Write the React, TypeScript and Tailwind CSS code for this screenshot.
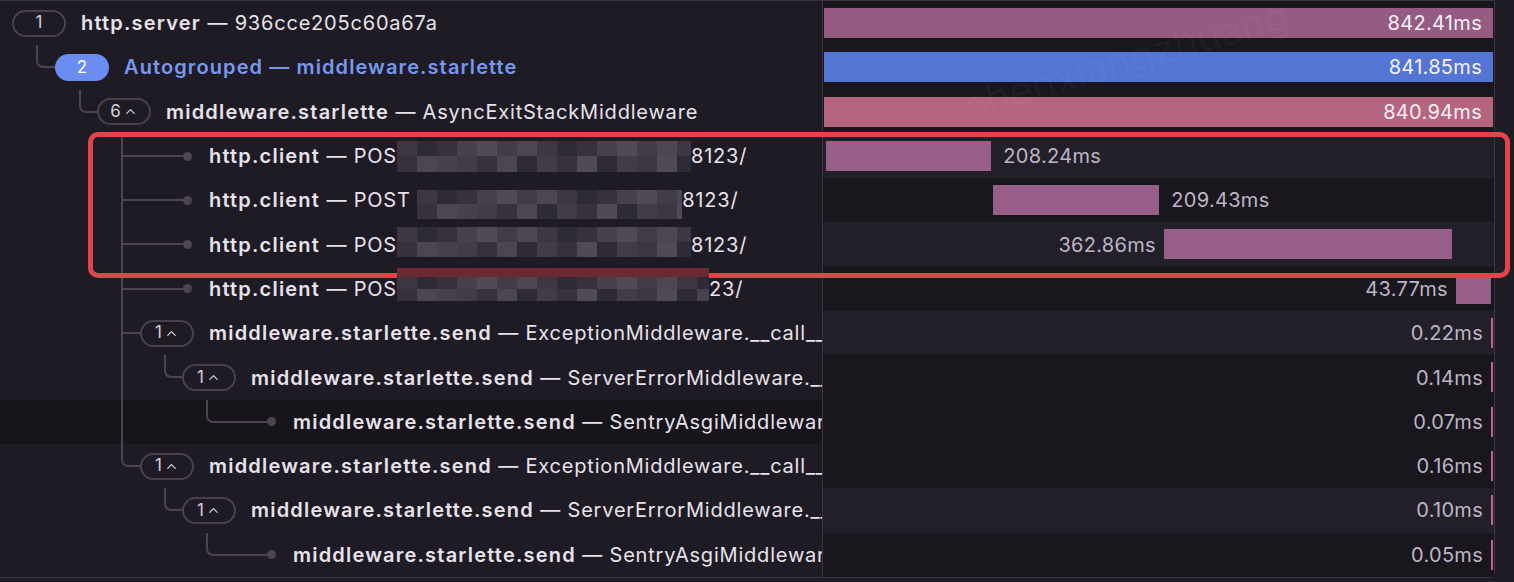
import { ChevronUp } from "lucide-react";

type Row = {
  depth: number;
  kind: "pill" | "leaf";
  count?: string;
  chevron?: boolean;
  blue?: boolean;
  name: string;
  desc?: string;
  redact?: "a" | "b" | "c" | "d";
  lines: string[];
  elbow?: string;
  rowBg?: string;
  barBg: string;
  start: number;
  dur: number;
  shown?: number;
  label: "inside" | "right" | "left";
  barColor: string;
};

const TOTAL = 842.41;

const padByDepth = [
  "pl-[12px]",
  "pl-[55px]",
  "pl-[97px]",
  "pl-[140px]",
  "pl-[182px]",
  "pl-[224px]",
];

// T-junction pieces for children that are not the last one
const vThrough = "left-[121px] top-[-9px] bottom-0 w-[2px]";
const hLeaf = "left-[121px] top-[21px] h-[2px] w-[63px]";
const hPill = "left-[121px] top-[21px] h-[2px] w-[19px]";

const light = "bg-[#231f29]";
const dark = "bg-[#19161e]";

const rows: Row[] = [
  { depth: 0, kind: "pill", count: "1", name: "http.server", desc: "936cce205c60a67a", lines: [], barBg: dark, start: 0, dur: 842.41, label: "inside", barColor: "bg-[#955b81]" },
  { depth: 1, kind: "pill", count: "2", blue: true, name: "Autogrouped — middleware.starlette", lines: [], elbow: "left-[36px] w-[19px]", barBg: dark, start: 0, dur: 842.41, shown: 841.85, label: "inside", barColor: "bg-[#5475d4]" },
  { depth: 2, kind: "pill", count: "6", chevron: true, name: "middleware.starlette", desc: "AsyncExitStackMiddleware", lines: [], elbow: "left-[79px] w-[18px]", barBg: dark, start: 0, dur: 842.41, shown: 840.94, label: "inside", barColor: "bg-[#b5657f]" },
  { depth: 3, kind: "leaf", name: "http.client", redact: "a", lines: [vThrough, hLeaf], barBg: light, start: 2.5, dur: 208.24, label: "right", barColor: "bg-[#975f89]" },
  { depth: 3, kind: "leaf", name: "http.client", redact: "b", lines: [vThrough, hLeaf], barBg: dark, start: 212.8, dur: 209.43, label: "right", barColor: "bg-[#975f89]" },
  { depth: 3, kind: "leaf", name: "http.client", redact: "c", lines: [vThrough, hLeaf], barBg: light, start: 428, dur: 362.86, label: "left", barColor: "bg-[#975f89]" },
  { depth: 3, kind: "leaf", name: "http.client", redact: "d", lines: [vThrough, hLeaf], barBg: dark, start: 795.6, dur: 43.77, label: "left", barColor: "bg-[#975f89]" },
  { depth: 3, kind: "pill", count: "1", chevron: true, name: "middleware.starlette.send", desc: "ExceptionMiddleware.__call__", lines: [vThrough, hPill], barBg: light, start: 839.9, dur: 0.22, label: "left", barColor: "bg-[#c2628f]" },
  { depth: 4, kind: "pill", count: "1", chevron: true, name: "middleware.starlette.send", desc: "ServerErrorMiddleware.__call__", lines: [vThrough], elbow: "left-[164px] w-[18px]", barBg: dark, start: 839.9, dur: 0.14, label: "left", barColor: "bg-[#c2628f]" },
  { depth: 5, kind: "leaf", name: "middleware.starlette.send", desc: "SentryAsgiMiddleware.__call__", lines: [vThrough], elbow: "left-[206px] w-[62px]", rowBg: "bg-[#17141b]", barBg: dark, start: 839.9, dur: 0.07, label: "left", barColor: "bg-[#c2628f]" },
  { depth: 3, kind: "pill", count: "1", chevron: true, name: "middleware.starlette.send", desc: "ExceptionMiddleware.__call__", lines: [], elbow: "left-[121px] w-[19px]", barBg: dark, start: 839.9, dur: 0.16, label: "left", barColor: "bg-[#c2628f]" },
  { depth: 4, kind: "pill", count: "1", chevron: true, name: "middleware.starlette.send", desc: "ServerErrorMiddleware.__call__", lines: [], elbow: "left-[164px] w-[18px]", barBg: light, start: 839.9, dur: 0.1, label: "left", barColor: "bg-[#c2628f]" },
  { depth: 5, kind: "leaf", name: "middleware.starlette.send", desc: "SentryAsgiMiddleware.__call__", lines: [], elbow: "left-[206px] w-[62px]", barBg: dark, start: 839.9, dur: 0.05, label: "left", barColor: "bg-[#c2628f]" },
];

const mosaicShades = [
  "bg-[#3c3742]",
  "bg-[#46414d]",
  "bg-[#4b4652]",
  "bg-[#36313c]",
  "bg-[#413c48]",
  "bg-[#2f2b35]",
  "bg-[#4f4a56]",
];

function Mosaic({ box, seed, redTop }: { box: string; seed: number; redTop?: boolean }) {
  const cols = 17;
  return (
    <span className={`relative z-20 inline-flex shrink-0 flex-col overflow-hidden ${box}`}>
      {redTop && <span className="h-[9px] w-full bg-[#6b2a33]" />}
      {[0, 1].map((r) => (
        <span key={r} className="flex flex-1">
          {Array.from({ length: cols }).map((_, c) => (
            <span
              key={c}
              className={`h-full w-[20px] shrink-0 ${mosaicShades[(c * 5 + r * 3 + seed * 7 + ((c * r) % 3)) % mosaicShades.length]}`}
            />
          ))}
        </span>
      ))}
    </span>
  );
}

function Pill({ row }: { row: Row }) {
  if (row.blue) {
    return (
      <div className="flex h-[27px] w-[54px] shrink-0 items-center justify-center rounded-full bg-[#6b8cf0] text-[17px] text-white">
        {row.count}
      </div>
    );
  }
  return (
    <div className="flex h-[27px] w-[54px] shrink-0 items-center justify-center gap-[2px] rounded-full border-2 border-[#48424f] text-[17px] text-[#d6d0dc]">
      <span>{row.count}</span>
      {row.chevron && <ChevronUp size={15} strokeWidth={2} className="text-[#d6d0dc]" />}
    </div>
  );
}

function Title({ row }: { row: Row }) {
  if (row.blue) {
    return <span className="font-semibold tracking-[1.1px] text-[#7898f0]">{row.name}</span>;
  }
  if (row.redact) {
    const r = row.redact;
    return (
      <span className="flex items-center whitespace-pre">
        <span className="font-semibold tracking-[1.2px]">{row.name}</span>
        <span>{r === "b" ? " — POST " : " — POS"}</span>
        {r === "a" && <Mosaic box="h-[31px] w-[294px]" seed={1} />}
        {r === "b" && <Mosaic box="h-[29px] w-[265px] mt-[8px]" seed={2} />}
        {r === "c" && <Mosaic box="h-[30px] w-[294px] -mt-[6px]" seed={3} />}
        {r === "d" && <Mosaic box="h-[33px] w-[312px] -mt-[8px]" seed={4} redTop />}
        <span>{r === "d" ? "23/" : "8123/"}</span>
      </span>
    );
  }
  return (
    <span className="whitespace-pre">
      <span className="font-semibold tracking-[1.2px]">{row.name}</span>
      {row.desc && <span>{` — ${row.desc}`}</span>}
    </span>
  );
}

function TreeCell({ row }: { row: Row }) {
  return (
    <div className={`relative h-full w-[822px] shrink-0 overflow-hidden ${row.rowBg ?? ""}`}>
      {row.lines.map((l, i) => (
        <div key={i} className={`absolute bg-[#4a4453] ${l}`} />
      ))}
      {row.elbow && (
        <div
          className={`absolute top-[-9px] h-[32px] rounded-bl-[7px] border-b-2 border-l-2 border-[#4a4453] ${row.elbow}`}
        />
      )}
      <div className={`relative flex h-full items-center gap-[15px] ${padByDepth[row.depth]}`}>
        {row.kind === "pill" ? (
          <Pill row={row} />
        ) : (
          <div className="flex w-[54px] shrink-0 justify-end pr-[2px]">
            <span className="h-[9px] w-[9px] rounded-full bg-[#4a4453]" />
          </div>
        )}
        <div className="text-[20px] tracking-[0.8px] whitespace-nowrap text-[#e7e2eb]">
          <Title row={row} />
        </div>
      </div>
    </div>
  );
}

function BarCell({ row }: { row: Row }) {
  const left = (row.start / TOTAL) * 100;
  const width = Math.min((row.dur / TOTAL) * 100, 100 - left);
  const ms = `${(row.shown ?? row.dur).toFixed(2)}ms`;
  return (
    <div className={`relative h-full flex-1 border-l border-[#3a3541] ${row.barBg}`}>
      <div className="absolute inset-y-0 right-[1px] left-[1px]">
        {row.label === "inside" ? (
          <div
            className={`absolute top-[7px] flex h-[30px] items-center justify-end pr-[11px] ${row.barColor}`}
            style={{ left: `${left}%`, width: `${width}%` }}
          >
            <span className="text-[20px] tracking-[0.3px] text-[#f5f1f7]">{ms}</span>
          </div>
        ) : (
          <div
            className={`absolute top-[7px] h-[30px] min-w-[2px] ${row.barColor}`}
            style={{ left: `${left}%`, width: `${width}%` }}
          />
        )}
        {row.label === "right" && (
          <span
            className="absolute top-0 flex h-full items-center text-[20px] tracking-[0.3px] text-[#bdb5c5]"
            style={{ left: `calc(${left + width}% + 12px)` }}
          >
            {ms}
          </span>
        )}
        {row.label === "left" && (
          <span
            className="absolute top-0 flex h-full items-center text-[20px] tracking-[0.3px] text-[#bdb5c5]"
            style={{ right: `calc(${100 - left}% + 8px)` }}
          >
            {ms}
          </span>
        )}
      </div>
    </div>
  );
}

export default function App() {
  return (
    <div
      className="relative h-[582px] w-[1514px] overflow-hidden bg-[#201c25]"
      style={{ fontFamily: "Inter, 'Noto Sans', sans-serif" }}
    >
      <div className="w-[1495px] rounded-br-md border-t border-r border-b border-[#3a3541] bg-[#1f1b24]">
        {rows.map((row, i) => (
          <div key={i} className="flex h-[44.3px]">
            <TreeCell row={row} />
            <BarCell row={row} />
          </div>
        ))}
      </div>

      {/* watermark */}
      <div className="pointer-events-none absolute top-[30px] left-[960px] -rotate-[16deg] text-[40px] text-white/[0.03]">
        shenxiangzhuang
      </div>
      <div className="pointer-events-none absolute top-[250px] left-[420px] -rotate-[16deg] text-[40px] text-white/[0.025]">
        shenxiangzhuang
      </div>

      {/* red annotation box */}
      <div className="pointer-events-none absolute top-[132px] left-[88px] z-10 h-[146px] w-[1422px] rounded-[10px] border-[5px] border-[#e2444c]" />
    </div>
  );
}
